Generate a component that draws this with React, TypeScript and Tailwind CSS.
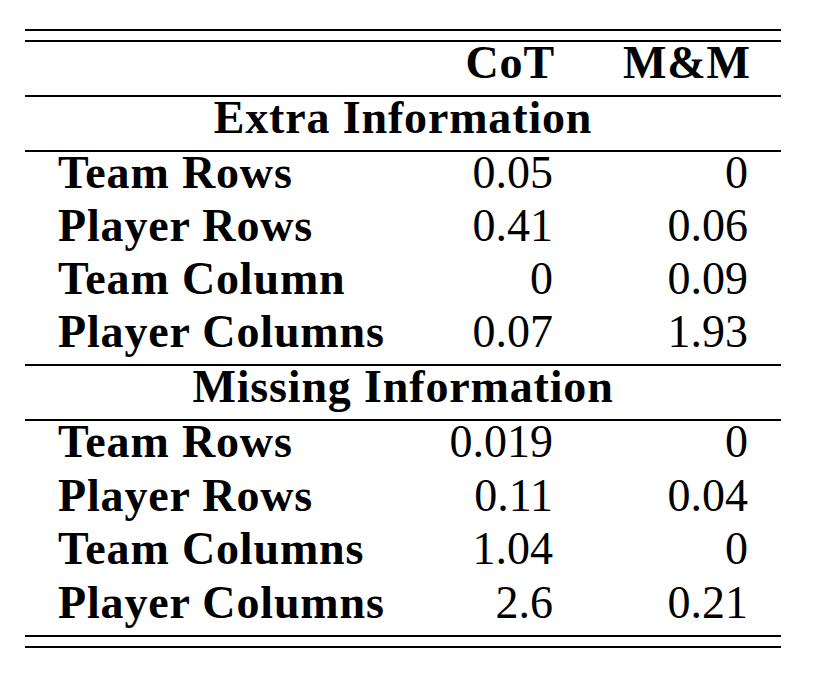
const extra = [
  ["Team Rows", "0.05", "0"],
  ["Player Rows", "0.41", "0.06"],
  ["Team Column", "0", "0.09"],
  ["Player Columns", "0.07", "1.93"],
];

const missing = [
  ["Team Rows", "0.019", "0"],
  ["Player Rows", "0.11", "0.04"],
  ["Team Columns", "1.04", "0"],
  ["Player Columns", "2.6", "0.21"],
];

function Rule() {
  return <div className="h-[2px] bg-black" />;
}

function Row({ cells, tall }: { cells: string[]; tall?: boolean }) {
  return (
    <div className={tall ? "flex h-[53.5px] leading-[42px]" : "flex h-[53px] leading-[42px]"}>
      <div className="flex-1 pl-[33px] font-bold tracking-[0.85px]">{cells[0]}</div>
      <div className="w-[104px] text-right">{cells[1]}</div>
      <div className="ml-[70px] w-[125px] text-right">{cells[2]}</div>
      <div className="w-[33px]" />
    </div>
  );
}

function Section({ title }: { title: string }) {
  return (
    <div className="h-[53px] text-center font-bold tracking-[0.85px] leading-[42px]">{title}</div>
  );
}

export default function App() {
  return (
    <div
      className="min-h-[681px] w-[814px] bg-white pt-[29px] text-[46px] text-black"
      style={{ fontFamily: '"Liberation Serif", "Times New Roman", serif' }}
    >
      <div className="ml-[25px] w-[756px]">
        <Rule />
        <div className="h-[9px]" />
        <Rule />
        <div className="flex h-[53px] font-bold tracking-[0.85px] leading-[42px]">
          <div className="flex-1" />
          <div className="w-[106px] text-right">CoT</div>
          <div className="ml-[68px] w-[126px] text-right">M&amp;M</div>
          <div className="w-[32px]" />
        </div>
        <Rule />
        <Section title="Extra Information" />
        <Rule />
        {extra.map((r) => (
          <Row key={"e" + r[0]} cells={r} />
        ))}
        <Rule />
        <Section title="Missing Information" />
        <Rule />
        {missing.map((r) => (
          <Row key={"m" + r[0]} cells={r} tall />
        ))}
        <Rule />
        <div className="h-[9px]" />
        <Rule />
      </div>
    </div>
  );
}
